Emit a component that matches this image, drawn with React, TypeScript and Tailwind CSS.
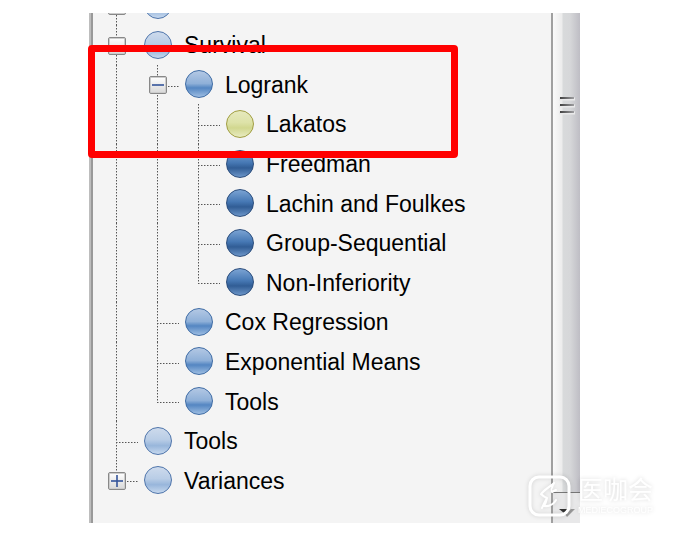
import { useState } from 'react'

type Tone = 'pale' | 'mid' | 'deep' | 'lime'
type Guide = 'line' | 'tee' | 'end' | 'plus' | 'minus'

interface TreeRow { label: string; tone: Tone; guides: Guide[] }

const ROWS: TreeRow[] = [
  { label: 'Survival',           tone: 'pale', guides: ['minus'] },
  { label: 'Logrank',            tone: 'mid',  guides: ['line', 'minus'] },
  { label: 'Lakatos',            tone: 'lime', guides: ['line', 'line', 'tee'] },
  { label: 'Freedman',           tone: 'deep', guides: ['line', 'line', 'tee'] },
  { label: 'Lachin and Foulkes', tone: 'deep', guides: ['line', 'line', 'tee'] },
  { label: 'Group-Sequential',   tone: 'deep', guides: ['line', 'line', 'tee'] },
  { label: 'Non-Inferiority',    tone: 'deep', guides: ['line', 'line', 'end'] },
  { label: 'Cox Regression',     tone: 'mid',  guides: ['line', 'tee'] },
  { label: 'Exponential Means',  tone: 'mid',  guides: ['line', 'tee'] },
  { label: 'Tools',              tone: 'mid',  guides: ['line', 'end'] },
  { label: 'Tools',              tone: 'pale', guides: ['tee'] },
  { label: 'Variances',          tone: 'pale', guides: ['plus'] },
]

const TONES: Record<Tone, string> = {
  pale: 'border-[#4f75ab] bg-[linear-gradient(#cddaec_0%,#b9cde6_45%,#98b6db_68%,#c6d8ee_100%)]',
  mid:  'border-[#3f6ca5] bg-[linear-gradient(#b3c8e4_0%,#8fb0d8_48%,#5486c2_65%,#9dbde2_100%)]',
  deep: 'border-[#2b4d7c] bg-[linear-gradient(#7ba3d3_0%,#4678b4_45%,#315d95_65%,#6b95c8_100%)]',
  lime: 'border-[#a09d40] bg-[linear-gradient(#e6e9bd_0%,#dde2a8_45%,#d1d78f_65%,#e8ebc0_100%)]',
}

const V_DOTS = 'w-px bg-[repeating-linear-gradient(#555_0_1px,#a8a8a8_1px_2px,#f4f4f4_2px_3px)]'
const H_DOTS = 'h-px bg-[repeating-linear-gradient(90deg,#555_0_1px,#a8a8a8_1px_2px,#f4f4f4_2px_3px)]'

function Toggle({ kind }: { kind: Guide }) {
  const [open, setOpen] = useState(kind === 'minus')
  return (
    <button
      aria-label="Toggle branch"
      aria-expanded={open}
      onClick={() => setOpen(o => !o)}
      className="relative z-10 mt-0.5 flex size-[18px] items-center justify-center rounded-xs border border-[#888] bg-linear-to-b from-white to-[#d8d8d8] shadow-[inset_0_0_0_1px_#ccc]"
    >
      <svg viewBox="0 0 12 12" className="size-3" stroke="#34549a" strokeWidth="1.6">
        <path d="M0 6h12" />
        {!open && <path d="M6 0v12" />}
      </svg>
    </button>
  )
}

function GuideCell({ kind }: { kind: Guide }) {
  const boxed = kind === 'plus' || kind === 'minus'
  const stopsHalfway = kind === 'end' || kind === 'plus'
  return (
    <span className="relative flex w-[41px] shrink-0 items-center justify-center">
      <span className={`absolute left-5 top-0 ${V_DOTS} ${stopsHalfway ? 'h-[21px]' : 'h-full'}`} />
      {boxed
        ? <span className={`absolute left-[31px] top-[21px] w-3 ${H_DOTS}`} />
        : kind !== 'line' && <span className={`absolute left-5 top-[21px] w-[22px] ${H_DOTS}`} />}
      {boxed && <Toggle kind={kind} />}
    </span>
  )
}

function Ball({ tone }: { tone: Tone }) {
  return (
    <span className="flex w-[42px] shrink-0 items-center justify-center">
      <span className={`size-7 rounded-full border ${TONES[tone]}`} />
    </span>
  )
}

function Watermark() {
  return (
    <div className="pointer-events-none absolute left-[437px] top-[462px] flex items-center gap-1.5 text-white drop-shadow-[0_0_2px_rgba(0,0,0,0.15)]">
      <svg viewBox="0 0 44 42" className="h-[42px] w-11" fill="none" stroke="white" strokeWidth="3" strokeLinejoin="round" strokeLinecap="round">
        <rect x="2" y="2" width="39" height="38" rx="9" />
        <path d="M26 8C23 11 17 14 13 19q3 3 6 4-3 5-5 10M26 8q-3 5-2 9l4-2M19 23q-1 5-3 8 8 1 12-6" strokeWidth="2" />
      </svg>
      <div className="flex flex-col whitespace-nowrap">
        <span className="text-[25px] leading-[29px]">医咖会</span>
        <span className="text-[9px] leading-[11px]">MEDIECOGROUP</span>
      </div>
    </div>
  )
}

export default function App() {
  return (
    <div className="bg-white pt-[13px] pr-[93px] pb-[11px] pl-[89px] font-['Liberation_Sans','Noto_Sans_CJK_SC',sans-serif]">
      <div className="relative flex h-[510px] border-l-2 border-[#bdbdbd] bg-[#f4f4f4]">
        <main className="min-w-0 flex-1 border-l-2 border-[#999] pl-[3px]">
          {/* bottom slice of the row scrolled out of view */}
          <div className="flex h-3 items-end overflow-hidden">
            <div className="flex h-10 shrink-0">
              <GuideCell kind="minus" />
              <Ball tone="pale" />
            </div>
          </div>
          <ul className="grid h-[475px] grid-rows-12">
            {ROWS.map((row, i) => (
              <li key={i} className="flex">
                {row.guides.map((g, j) => <GuideCell key={j} kind={g} />)}
                <Ball tone={row.tone} />
                <span className="mt-px ml-[5px] self-center text-[23px] leading-7 whitespace-nowrap text-black">{row.label}</span>
              </li>
            ))}
          </ul>
        </main>

        {/* scrollbar */}
        <div className="flex w-[29px] flex-col border-l-2 border-[#a0a0a0]">
          <div className="flex h-[480px] flex-col items-center border-b border-[#777] bg-[linear-gradient(90deg,#fafafa_0,#ececec_9px,#d8dadb_10px,#d6d7d9_17px,#bebdc4_100%)] pt-[82px]">
            <svg viewBox="0 0 16 20" className="h-5 w-4" fill="none">
              <defs>
                <linearGradient id="grip" gradientUnits="userSpaceOnUse" x1="0" y1="0" x2="16" y2="0">
                  <stop offset="0" stopColor="#3a3a3a" />
                  <stop offset="1" stopColor="#a5a5a8" />
                </linearGradient>
              </defs>
              <path d="M0 4h16M0 11h16M0 18h16" stroke="#e9e9ea" strokeWidth="3" />
              <path d="M1 3h14M1 10h14M1 17h14" stroke="url(#grip)" strokeWidth="2" />
            </svg>
          </div>
          <div className="flex flex-1 justify-center bg-[#e8e8e9] pt-4">
            <svg viewBox="0 0 16 10" className="h-2.5 w-4">
              <path d="M0 0h9L5 4z" fill="#333" />
              <path d="M12 0h4L8 8 6 5z" fill="#999" />
            </svg>
          </div>
        </div>

        <div className="pointer-events-none absolute -left-[3px] top-8 z-20 h-[113px] w-[370px] rounded-sm border-[7px] border-[#f00]" />
        <Watermark />
      </div>
    </div>
  )
}
